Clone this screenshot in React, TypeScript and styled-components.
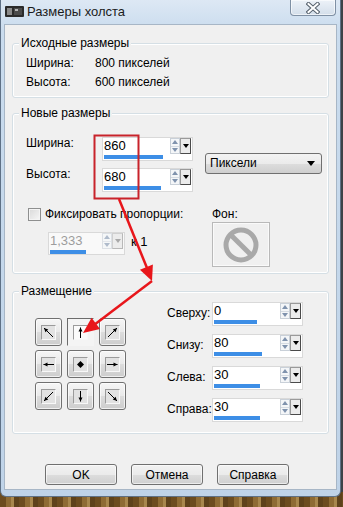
import styled, { createGlobalStyle } from 'styled-components';

const GlobalStyle = createGlobalStyle`
  html, body { margin: 0; padding: 0; }
  body {
    font-family: "Liberation Sans", Arial, sans-serif;
    font-size: 12px;
    color: #000;
  }
`;

type Dir = 'nw' | 'n' | 'ne' | 'w' | 'c' | 'e' | 'sw' | 's' | 'se';

const arrowLines: Record<Exclude<Dir, 'c'>, [number, number, number, number]> = {
  nw: [11, 11, 2, 2],
  n: [6.5, 12, 6.5, 1.5],
  ne: [2, 11, 11, 2],
  w: [12, 6.5, 1.5, 6.5],
  e: [1, 6.5, 11.5, 6.5],
  sw: [11, 2, 2, 11],
  s: [6.5, 1, 6.5, 11.5],
  se: [2, 2, 11, 11],
};

const anchors: Dir[] = ['nw', 'n', 'ne', 'w', 'c', 'e', 'sw', 's', 'se'];

const offsets = [
  { label: 'Сверху:', value: '0', fill: 43 },
  { label: 'Снизу:', value: '80', fill: 48 },
  { label: 'Слева:', value: '30', fill: 46 },
  { label: 'Справа:', value: '30', fill: 46 },
];

function head(x1: number, y1: number, x2: number, y2: number, len: number, half: number) {
  const l = Math.hypot(x2 - x1, y2 - y1);
  const ux = (x2 - x1) / l;
  const uy = (y2 - y1) / l;
  const bx = x2 - ux * len;
  const by = y2 - uy * len;
  return `${x2},${y2} ${bx - uy * half},${by + ux * half} ${bx + uy * half},${by - ux * half}`;
}

function AnchorGlyph({ dir }: { dir: Dir }) {
  if (dir === 'c') {
    return (
      <svg width="13" height="13" viewBox="0 0 13 13">
        <polygon points="6.5,3 10,6.5 6.5,10 3,6.5" fill="#000" />
      </svg>
    );
  }
  const [x1, y1, x2, y2] = arrowLines[dir];
  return (
    <svg width="13" height="13" viewBox="0 0 13 13">
      <line x1={x1} y1={y1} x2={x2} y2={y2} stroke="#000" strokeWidth="1" />
      <polygon points={head(x1, y1, x2, y2, 4, 2)} fill="#000" />
    </svg>
  );
}

function SpinField({
  value,
  fill,
  width = 91,
  height = 24,
  disabled,
}: {
  value: string;
  fill: number;
  width?: number;
  height?: number;
  disabled?: boolean;
}) {
  return (
    <FieldBox $width={width} $height={height} $disabled={disabled}>
      <EditRow>
        <FieldValue $disabled={disabled}>{value}</FieldValue>
        <Spinner $disabled={disabled}>
          <SpinHalf $up />
          <SpinHalf />
        </Spinner>
        <DropButton $disabled={disabled}>
          <DownTriangle $disabled={disabled} />
        </DropButton>
      </EditRow>
      <BarFill $fill={fill} />
    </FieldBox>
  );
}

export default function App() {
  return (
    <>
      <GlobalStyle />
      <Desktop>
        <Window>
          <TitleBar>
            <TitleIcon>
              <svg width="19" height="13" viewBox="0 0 19 13">
                <rect x="0" y="1" width="19" height="11" rx="1" fill="#2b2b2b" />
                <rect x="2" y="3" width="5" height="7" fill="#8a8a8a" />
                <rect x="9" y="3" width="8" height="7" fill="#4a4a4a" />
                <rect x="10" y="4" width="3" height="2" fill="#b5b5b5" />
              </svg>
            </TitleIcon>
            <TitleText>Размеры холста</TitleText>
            <CloseButton>
              <svg width="14" height="12" viewBox="0 0 14 12">
                <path d="M2.5 2 L11.5 10 M11.5 2 L2.5 10" stroke="#55606c" strokeWidth="4" strokeLinecap="square" />
                <path d="M2.5 2 L11.5 10 M11.5 2 L2.5 10" stroke="#fff" strokeWidth="2" strokeLinecap="square" />
              </svg>
            </CloseButton>
          </TitleBar>

          <Client>
            <Group $top={18} $height={55}>
              <GroupTitle>Исходные размеры</GroupTitle>
              <InfoRows>
                <InfoRow>
                  <InfoLabel>Ширина:</InfoLabel>
                  <span>800 пикселей</span>
                </InfoRow>
                <InfoRow>
                  <InfoLabel>Высота:</InfoLabel>
                  <span>600 пикселей</span>
                </InfoRow>
              </InfoRows>
            </Group>

            <Group $top={15} $height={161}>
              <GroupTitle>Новые размеры</GroupTitle>
              <SizeSection>
                <SizeRows>
                  <SizeRow>
                    <SizeLabel>Ширина:</SizeLabel>
                    <SpinField value="860" fill={59} />
                  </SizeRow>
                  <SizeRow>
                    <SizeLabel>Высота:</SizeLabel>
                    <SpinField value="680" fill={57} />
                  </SizeRow>
                </SizeRows>
                <UnitSelect>
                  <span>Пиксели</span>
                  <SelectArrow />
                </UnitSelect>
              </SizeSection>
              <RatioSection>
                <RatioColumn>
                  <CheckRow>
                    <CheckBox />
                    <span>Фиксировать пропорции:</span>
                  </CheckRow>
                  <RatioRow>
                    <SpinField value="1,333" fill={36} width={77} height={23} disabled />
                    <RatioSuffix>к 1</RatioSuffix>
                  </RatioRow>
                </RatioColumn>
                <BackColumn>
                  <span>Фон:</span>
                  <Swatch>
                    <svg width="40" height="40" viewBox="0 0 40 40">
                      <circle cx="20" cy="20" r="15" fill="none" stroke="#a9a9a9" strokeWidth="5" />
                      <line x1="9.4" y1="9.4" x2="30.6" y2="30.6" stroke="#a9a9a9" strokeWidth="5" />
                    </svg>
                  </Swatch>
                </BackColumn>
              </RatioSection>
            </Group>

            <Group $top={17} $height={143}>
              <GroupTitle>Размещение</GroupTitle>
              <PlacementBody>
                <AnchorGrid>
                  {anchors.map((d) => (
                    <AnchorButton key={d} $active={d === 'n'}>
                      <AnchorFace $active={d === 'n'}>
                        <AnchorGlyph dir={d} />
                      </AnchorFace>
                    </AnchorButton>
                  ))}
                </AnchorGrid>
                <OffsetList>
                  {offsets.map((o) => (
                    <OffsetRow key={o.label}>
                      <OffsetLabel>{o.label}</OffsetLabel>
                      <SpinField value={o.value} fill={o.fill} />
                    </OffsetRow>
                  ))}
                </OffsetList>
              </PlacementBody>
            </Group>

            <ButtonRow>
              <PushButton>OK</PushButton>
              <PushButton>Отмена</PushButton>
              <PushButton>Справка</PushButton>
            </ButtonRow>
          </Client>

          <Markup width="341" height="497" viewBox="0 0 341 497">
            <rect x="93.5" y="135.5" width="44" height="63" fill="none" stroke="#c8232b" strokeWidth="2" />
            <line x1="118" y1="199" x2="146" y2="268" stroke="#e8161b" strokeWidth="2.5" />
            <polygon points={head(118, 199, 151, 281, 15, 7)} fill="#e8161b" />
            <line x1="151" y1="281" x2="93" y2="325" stroke="#e8161b" strokeWidth="2.5" />
            <polygon points={head(151, 281, 82, 333, 16, 7)} fill="#e8161b" />
          </Markup>
        </Window>
      </Desktop>
    </>
  );
}

const Desktop = styled.div`
  width: 343px;
  height: 507px;
  overflow: hidden;
  background:
    linear-gradient(#3d4247, #3d4247) top / 100% 492px no-repeat,
    repeating-linear-gradient(90deg, #6c4c1f 0 6px, #8e6b34 6px 11px, #a8874d 11px 14px, #5e421b 14px 19px);
`;

const Window = styled.div`
  position: relative;
  width: 341px;
  height: 497px;
  box-sizing: border-box;
  display: flex;
  flex-direction: column;
  background: linear-gradient(180deg, #dde8f4 0, #cadcee 30px, #bfd3e8 100%);
  border: 1px solid #5f7186;
  border-top: none;
  border-radius: 0 0 6px 6px;
`;

const TitleBar = styled.div`
  height: 24px;
  display: flex;
  align-items: flex-start;
  padding-left: 4px;
`;

const TitleIcon = styled.div`
  margin-top: 5px;
  width: 19px;
  height: 13px;
`;

const TitleText = styled.div`
  margin: 4px 0 0 3px;
  font-size: 13px;
  line-height: 16px;
  color: #1b1b1b;
`;

const CloseButton = styled.div`
  margin-left: auto;
  margin-right: 4px;
  width: 46px;
  height: 16px;
  box-sizing: border-box;
  border: 1px solid #7f90a4;
  border-top: none;
  border-radius: 0 0 4px 4px;
  background: linear-gradient(180deg, #edf2f8, #d3deea);
  box-shadow: inset 0 0 0 1px rgba(255, 255, 255, 0.6);
  display: flex;
  align-items: center;
  justify-content: center;
`;

const Client = styled.div`
  flex: 1;
  margin: 0 3px 6px;
  box-sizing: border-box;
  border: 1px solid #a7b6c6;
  background: #f0f0f0;
  display: flex;
  flex-direction: column;
`;

const Group = styled.div<{ $top: number; $height: number }>`
  margin: ${(p) => p.$top}px 7px 0;
  height: ${(p) => p.$height}px;
  box-sizing: border-box;
  border: 1px solid #d5dfe5;
  border-radius: 3px;
  box-shadow: inset 0 0 0 1px #fff;
`;

const GroupTitle = styled.div`
  display: table;
  margin: -8px 0 0 6px;
  padding: 0 2px;
  background: #f0f0f0;
  line-height: 14px;
`;

const InfoRows = styled.div`
  margin-top: 5px;
  display: flex;
  flex-direction: column;
  gap: 3px;
`;

const InfoRow = styled.div`
  display: flex;
  line-height: 16px;
`;

const InfoLabel = styled.span`
  margin-left: 13px;
  width: 69px;
`;

const SizeSection = styled.div`
  margin-top: 17px;
  display: flex;
  align-items: center;
`;

const SizeRows = styled.div`
  display: flex;
  flex-direction: column;
  gap: 7px;
`;

const SizeRow = styled.div`
  display: flex;
  align-items: flex-start;
  height: 24px;
`;

const SizeLabel = styled.span`
  margin: -1px 0 0 13px;
  width: 76px;
  line-height: 14px;
`;

const UnitSelect = styled.div`
  margin: -3px 0 0 12px;
  width: 117px;
  height: 21px;
  box-sizing: border-box;
  border: 1px solid #707070;
  border-radius: 3px;
  background: linear-gradient(180deg, #f3f3f3 0, #ebebeb 50%, #dddddd 51%, #cfcfcf 100%);
  display: flex;
  align-items: center;
  padding: 0 6px 0 4px;
  font-size: 12px;
`;

const SelectArrow = styled.span`
  margin-left: auto;
  width: 0;
  height: 0;
  border-left: 4px solid transparent;
  border-right: 4px solid transparent;
  border-top: 5px solid #000;
`;

const RatioSection = styled.div`
  margin-top: 15px;
  display: flex;
`;

const RatioColumn = styled.div`
  width: 199px;
  display: flex;
  flex-direction: column;
`;

const CheckRow = styled.div`
  display: flex;
  align-items: center;
  height: 14px;
  padding-left: 15px;
  gap: 4px;
  line-height: 14px;
`;

const CheckBox = styled.span`
  width: 13px;
  height: 13px;
  box-sizing: border-box;
  border: 1px solid #8e8f8f;
  background: linear-gradient(135deg, #d9d9d9, #f7f7f7);
  box-shadow: inset 0 0 0 1px #f4f4f4;
`;

const RatioRow = styled.div`
  margin: 11px 0 0 35px;
  display: flex;
  align-items: center;
`;

const RatioSuffix = styled.span`
  margin: -4px 0 0 6px;
  font-size: 13px;
`;

const BackColumn = styled.div`
  display: flex;
  flex-direction: column;
  line-height: 14px;
`;

const Swatch = styled.div`
  margin-top: 1px;
  width: 58px;
  height: 45px;
  box-sizing: border-box;
  border: 1px solid #b9b9b9;
  box-shadow: inset 0 0 0 1px #fafafa;
  display: flex;
  align-items: center;
  justify-content: center;
`;

const PlacementBody = styled.div`
  display: flex;
  align-items: flex-start;
`;

const AnchorGrid = styled.div`
  margin: 20px 0 0 22px;
  display: grid;
  grid-template-columns: repeat(3, 27px);
  grid-auto-rows: 28px;
  gap: 4px 5px;
`;

const AnchorButton = styled.div<{ $active?: boolean }>`
  box-sizing: border-box;
  display: flex;
  align-items: center;
  justify-content: center;
  border: 1px solid ${(p) => (p.$active ? 'transparent' : '#707070')};
  border-top-color: ${(p) => (p.$active ? '#6c6c6c' : '#707070')};
  border-left-color: ${(p) => (p.$active ? '#6c6c6c' : '#707070')};
  border-radius: ${(p) => (p.$active ? '0' : '3px')};
  background: ${(p) =>
    p.$active ? '#f4f4f4' : 'linear-gradient(180deg, #f6f6f6 0, #e9e9e9 50%, #dcdcdc 51%, #cdcdcd 100%)'};
  box-shadow: ${(p) => (p.$active ? 'none' : 'inset 0 0 0 1px rgba(255,255,255,0.7)')};
`;

const AnchorFace = styled.div<{ $active?: boolean }>`
  width: 15px;
  height: 15px;
  box-sizing: border-box;
  border: 1px solid #9b9b9b;
  border-right-color: #f8f8f8;
  border-bottom-color: #f8f8f8;
  background: ${(p) => (p.$active ? '#fbfbfb' : '#e2e2e2')};
  display: flex;
`;

const OffsetList = styled.div`
  margin: 4px 0 0 41px;
  display: flex;
  flex-direction: column;
  gap: 8px;
`;

const OffsetRow = styled.div`
  display: flex;
  align-items: center;
  height: 24px;
`;

const OffsetLabel = styled.span`
  width: 45px;
  margin-top: -2px;
`;

const FieldBox = styled.div<{ $width: number; $height: number; $disabled?: boolean }>`
  width: ${(p) => p.$width}px;
  height: ${(p) => p.$height}px;
  box-sizing: border-box;
  border: 1px solid #d9d9d9;
  background: ${(p) => (p.$disabled ? '#f9f9f9' : '#fff')};
  display: flex;
  flex-direction: column;
`;

const EditRow = styled.div`
  display: flex;
  height: 16px;
`;

const FieldValue = styled.span<{ $disabled?: boolean }>`
  flex: 1;
  padding-left: 1px;
  font-size: 13px;
  line-height: 16px;
  color: ${(p) => (p.$disabled ? '#9d9d9d' : '#000')};
`;

const Spinner = styled.div<{ $disabled?: boolean }>`
  width: 10px;
  box-sizing: border-box;
  border: 1px solid #c9d0d8;
  background: #f4f6f8;
  display: flex;
  flex-direction: column;
  opacity: ${(p) => (p.$disabled ? 0.6 : 1)};
`;

const SpinHalf = styled.span<{ $up?: boolean }>`
  flex: 1;
  display: flex;
  align-items: center;
  justify-content: center;
  border-bottom: ${(p) => (p.$up ? '1px solid #d5dbe2' : 'none')};
  &::after {
    content: '';
    width: 0;
    height: 0;
    border-left: 3px solid transparent;
    border-right: 3px solid transparent;
    ${(p) => (p.$up ? 'border-bottom: 4px solid #7f92ad;' : 'border-top: 4px solid #7f92ad;')}
  }
`;

const DropButton = styled.div<{ $disabled?: boolean }>`
  width: 11px;
  margin-right: 1px;
  box-sizing: border-box;
  border: 1px solid ${(p) => (p.$disabled ? '#b8b8b8' : '#4a4a4a')};
  border-top-color: ${(p) => (p.$disabled ? '#d0d0d0' : '#9a9a9a')};
  border-left-color: ${(p) => (p.$disabled ? '#d0d0d0' : '#9a9a9a')};
  background: #ececec;
  display: flex;
  align-items: center;
  justify-content: center;
`;

const DownTriangle = styled.span<{ $disabled?: boolean }>`
  width: 0;
  height: 0;
  border-left: 3.5px solid transparent;
  border-right: 3.5px solid transparent;
  border-top: 4px solid ${(p) => (p.$disabled ? '#a9a9a9' : '#000')};
`;

const BarFill = styled.span<{ $fill: number }>`
  margin: 1px 0 0 1px;
  width: ${(p) => p.$fill}px;
  height: 4px;
  background: #3d8ee6;
`;

const ButtonRow = styled.div`
  margin-top: 30px;
  padding-left: 40px;
  display: flex;
  gap: 14px;
`;

const PushButton = styled.button`
  width: 72px;
  height: 21px;
  box-sizing: border-box;
  padding: 0;
  border: 1px solid #707070;
  border-radius: 3px;
  background: linear-gradient(180deg, #f2f2f2 0, #ebebeb 50%, #dddddd 51%, #cfcfcf 100%);
  box-shadow: inset 0 0 0 1px rgba(255, 255, 255, 0.6);
  font-family: "Liberation Sans", Arial, sans-serif;
  font-size: 12px;
  color: #000;
`;

const Markup = styled.svg`
  position: absolute;
  left: 0;
  top: 0;
  pointer-events: none;
`;
